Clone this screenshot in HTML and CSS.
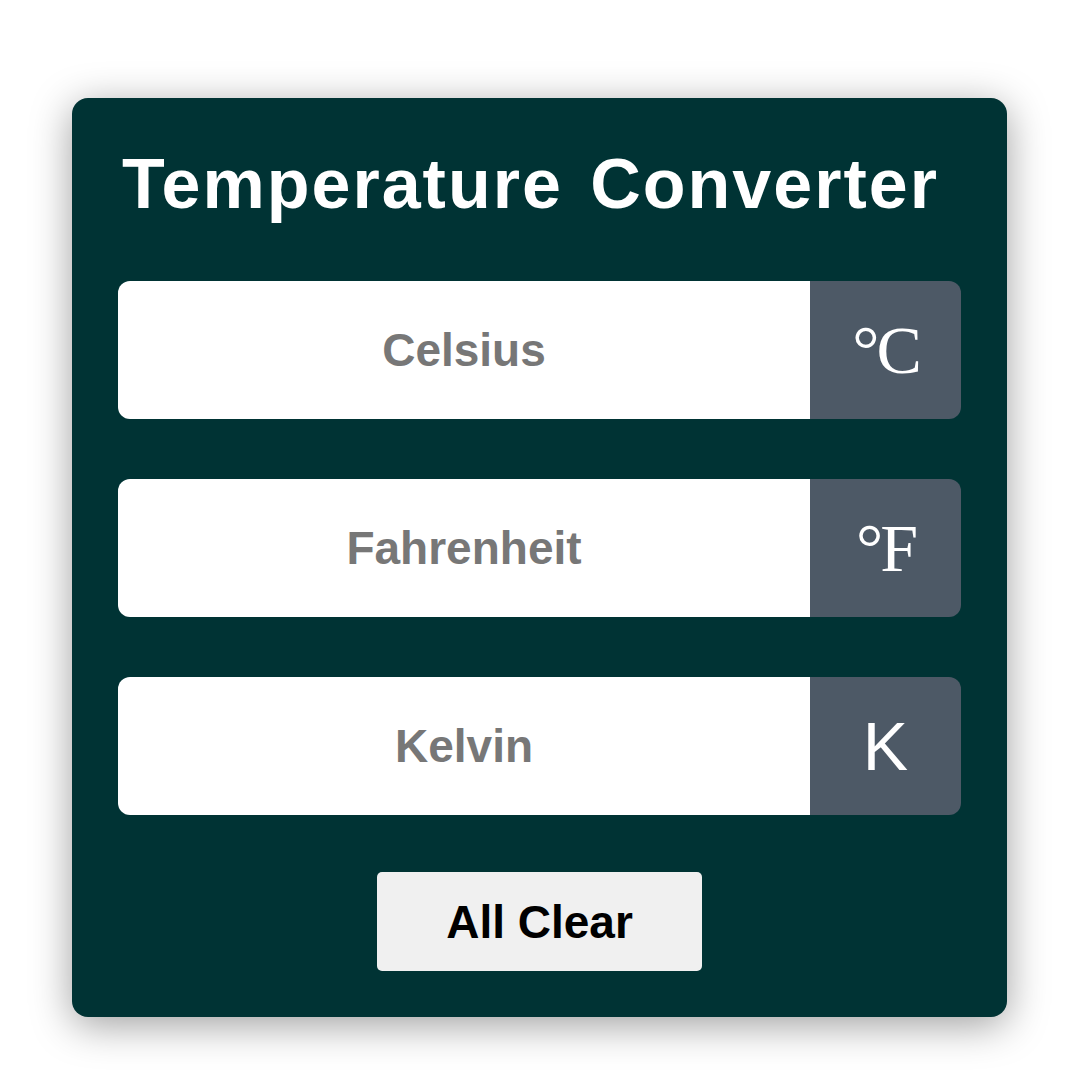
FILE: index.html
```html
<!DOCTYPE html>
<html>
<head>
<meta charset="utf-8">
<link rel="stylesheet" href="styles.css">
</head>
<body>
<div class="card">
  <h1 class="title">Temperature Converter</h1>
  <div class="row">
    <input class="field" type="text" placeholder="Celsius">
    <div class="unit"><span class="sym-serif">°C</span></div>
  </div>
  <div class="row">
    <input class="field" type="text" placeholder="Fahrenheit">
    <div class="unit"><span class="sym-serif">°F</span></div>
  </div>
  <div class="row">
    <input class="field" type="text" placeholder="Kelvin">
    <div class="unit unit-sans">K</div>
  </div>
  <div class="actions">
    <button class="clear">All Clear</button>
  </div>
</div>
</body>
</html>
```
FILE: styles.css
```css
html, body {
  margin: 0;
  padding: 0;
  background: #ffffff;
}
body {
  width: 1080px;
  height: 1080px;
  font-family: "Liberation Sans", Arial, sans-serif;
}
.card {
  box-sizing: border-box;
  margin: 98px 0 0 72px;
  width: 935px;
  height: 919px;
  background: #003334;
  border-radius: 16px;
  box-shadow: 0 8px 40px rgba(0, 0, 0, 0.38);
  padding: 46px 46px 0;
  display: flex;
  flex-direction: column;
}
.title {
  margin: 0;
  padding-left: 4px;
  color: #ffffff;
  font-size: 70px;
  font-weight: 700;
  line-height: normal;
  letter-spacing: 2px;
  word-spacing: 6px;
  white-space: nowrap;
}
.row {
  display: flex;
  height: 138px;
}
.title + .row {
  margin-top: 57px;
}
.row + .row {
  margin-top: 60px;
}
.field {
  flex: 1;
  min-width: 0;
  border: none;
  outline: none;
  margin: 0;
  padding: 0;
  background: #ffffff;
  border-radius: 12px 0 0 12px;
  text-align: center;
  font-family: "Liberation Sans", Arial, sans-serif;
  font-size: 46px;
  font-weight: 700;
  color: #333;
}
.field::placeholder {
  color: #777777;
  opacity: 1;
}
.unit {
  width: 151px;
  background: #4d5966;
  border-radius: 0 12px 12px 0;
  color: #ffffff;
  display: flex;
  align-items: center;
  justify-content: center;
  line-height: 1;
  font-family: "Liberation Sans", Arial, sans-serif;
}
.sym-serif {
  font-family: "Liberation Serif", "Times New Roman", serif;
  font-size: 68px;
  letter-spacing: -3px;
}
.unit-sans {
  font-family: Arial, "Liberation Sans", "DejaVu Sans", sans-serif;
  font-size: 68px;
  font-weight: 400;
}
.actions {
  display: flex;
  justify-content: center;
  margin-top: 57px;
}
.clear {
  width: 325px;
  height: 99px;
  border: none;
  border-radius: 5px;
  background: #f0f0f0;
  color: #000000;
  font-family: "Liberation Sans", Arial, sans-serif;
  font-size: 46px;
  font-weight: 700;
  cursor: pointer;
}
```
